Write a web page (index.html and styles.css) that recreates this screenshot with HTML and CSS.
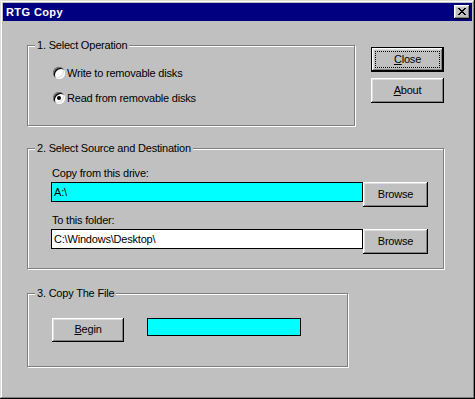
FILE: index.html
```html
<!DOCTYPE html>
<html>
<head>
<meta charset="utf-8">
<title>RTG Copy</title>
<link rel="stylesheet" href="styles.css">
</head>
<body>
<div class="window">
  <div class="titlebar">
    <span class="title">RTG Copy</span>
    <span class="tb-close">
      <svg width="8" height="7" viewBox="0 0 8 7" shape-rendering="crispEdges"><path fill="#000" d="M0 0h2v1H0zM6 0h2v1H6zM1 1h2v1H1zM5 1h2v1H5zM2 2h4v1H2zM3 3h2v1H3zM2 4h4v1H2zM1 5h2v1H1zM5 5h2v1H5zM0 6h2v1H0zM6 6h2v1H6z"/></svg>
    </span>
  </div>
  <div class="content">
    <div class="top-row">
      <div class="group g1">
        <span class="legend">1. Select Operation</span>
        <div class="radio-row"><span class="radio"></span><span class="txt">Write to removable disks</span></div>
        <div class="radio-row"><span class="radio checked"></span><span class="txt">Read from removable disks</span></div>
      </div>
      <div class="side-buttons">
        <div class="btn side default"><span class="focus"><u>C</u>lose</span></div>
        <div class="btn side"><span class="lbl"><u>A</u>bout</span></div>
      </div>
    </div>

    <div class="group g2">
      <span class="legend">2. Select Source and Destination</span>
      <div class="field">
        <div class="field-label">Copy from this drive:</div>
        <div class="field-row">
          <div class="textbox cyan">A:\</div>
          <div class="btn browse"><span class="lbl">Browse</span></div>
        </div>
      </div>
      <div class="field second">
        <div class="field-label">To this folder:</div>
        <div class="field-row">
          <div class="textbox">C:\Windows\Desktop\</div>
          <div class="btn browse"><span class="lbl">Browse</span></div>
        </div>
      </div>
    </div>

    <div class="group g3">
      <span class="legend">3. Copy The File</span>
      <div class="copy-row">
        <div class="btn begin"><span class="lbl"><u>B</u>egin</span></div>
        <div class="progress"></div>
      </div>
    </div>
  </div>
</div>
</body>
</html>
```

FILE: styles.css
```css
html, body {
  margin: 0;
  padding: 0;
  background: #c0c0c0;
}

body {
  font-family: "Liberation Sans", Arial, sans-serif;
  font-size: 11px;
  color: #000;
  letter-spacing: -0.2px;
}

.window {
  width: 475px;
  height: 399px;
  box-sizing: border-box;
  padding: 3px;
  background: #c0c0c0;
  box-shadow:
    inset -1px -1px #000,
    inset 1px 1px #dfdfdf,
    inset -2px -2px #808080,
    inset 2px 2px #fff;
}

.titlebar {
  height: 18px;
  background: #000080;
  display: flex;
  align-items: center;
  justify-content: space-between;
  padding: 0 2px 0 3px;
  color: #fff;
}

.title {
  font-weight: bold;
  font-size: 11px;
  letter-spacing: 0.4px;
  line-height: 18px;
}

.tb-close {
  width: 16px;
  height: 14px;
  box-sizing: border-box;
  background: #c0c0c0;
  display: flex;
  align-items: center;
  justify-content: center;
  padding: 0 1px 1px 0;
  box-shadow:
    inset -1px -1px #000,
    inset 1px 1px #fff,
    inset -2px -2px #808080,
    inset 2px 2px #dfdfdf;
}

.tb-close svg {
  display: block;
}

.content {
  display: flex;
  flex-direction: column;
  align-items: flex-start;
  padding-left: 24px;
}

.top-row {
  display: flex;
  align-items: flex-start;
  margin-top: 24px;
}

.group {
  position: relative;
  box-sizing: border-box;
  border: 1px solid #808080;
  box-shadow: inset 1px 1px #fff, 1px 1px #fff;
}

.legend {
  position: absolute;
  top: -7px;
  left: 7px;
  padding: 0 2px;
  background: #c0c0c0;
  line-height: 13px;
  white-space: nowrap;
}

.g1 {
  width: 328px;
  height: 81px;
  padding: 19px 0 0 25px;
}

.radio-row {
  display: flex;
  align-items: center;
  height: 16px;
  gap: 2px;
}

.radio-row + .radio-row {
  margin-top: 9px;
}

.radio {
  position: relative;
  width: 12px;
  height: 12px;
  border-radius: 50%;
  background: #fff;
  box-shadow:
    inset 1px 1px #808080,
    inset -1px -1px #fff,
    inset 2px 2px #000,
    inset -2px -2px #dfdfdf;
}

.radio.checked::after {
  content: "";
  position: absolute;
  left: 4px;
  top: 4px;
  width: 4px;
  height: 4px;
  border-radius: 50%;
  background: #000;
}

.txt {
  line-height: 16px;
}

.side-buttons {
  display: flex;
  flex-direction: column;
  gap: 6px;
  margin-left: 16px;
  margin-top: 2px;
}

.btn {
  box-sizing: border-box;
  display: flex;
  align-items: center;
  justify-content: center;
  background: #c0c0c0;
  box-shadow:
    inset -1px -1px #000,
    inset 1px 1px #fff,
    inset -2px -2px #808080,
    inset 2px 2px #dfdfdf;
}

.btn .lbl {
  line-height: 13px;
  padding-bottom: 1px;
}

.btn u {
  text-decoration: underline;
  text-underline-offset: 1px;
}

.side {
  width: 73px;
  height: 25px;
}

.default {
  border: 1px solid #000;
  padding: 3px;
  align-items: stretch;
}

.focus {
  flex: 1;
  display: flex;
  align-items: center;
  justify-content: center;
  border: 1px dotted #000;
  line-height: 13px;
}

.g2 {
  width: 417px;
  height: 121px;
  margin-top: 22px;
  padding: 18px 0 0 23px;
}

.field {
  display: flex;
  flex-direction: column;
}

.field.second {
  margin-top: 7px;
}

.field-label {
  line-height: 13px;
  padding-left: 1px;
}

.field-row {
  display: flex;
  align-items: flex-start;
  margin-top: 2px;
}

.textbox {
  width: 312px;
  height: 20px;
  box-sizing: border-box;
  border: 1px solid #000;
  background: #fff;
  padding-left: 2px;
  line-height: 18px;
  white-space: nowrap;
}

.textbox.cyan {
  background: #00ffff;
}

.browse {
  width: 65px;
  height: 25px;
}

.g3 {
  width: 321px;
  height: 74px;
  margin-top: 24px;
  padding: 24px 0 0 24px;
}

.copy-row {
  display: flex;
  align-items: flex-start;
  gap: 23px;
}

.begin {
  width: 72px;
  height: 24px;
}

.progress {
  width: 154px;
  height: 18px;
  box-sizing: border-box;
  border: 1px solid #000;
  background: #00ffff;
}
```
